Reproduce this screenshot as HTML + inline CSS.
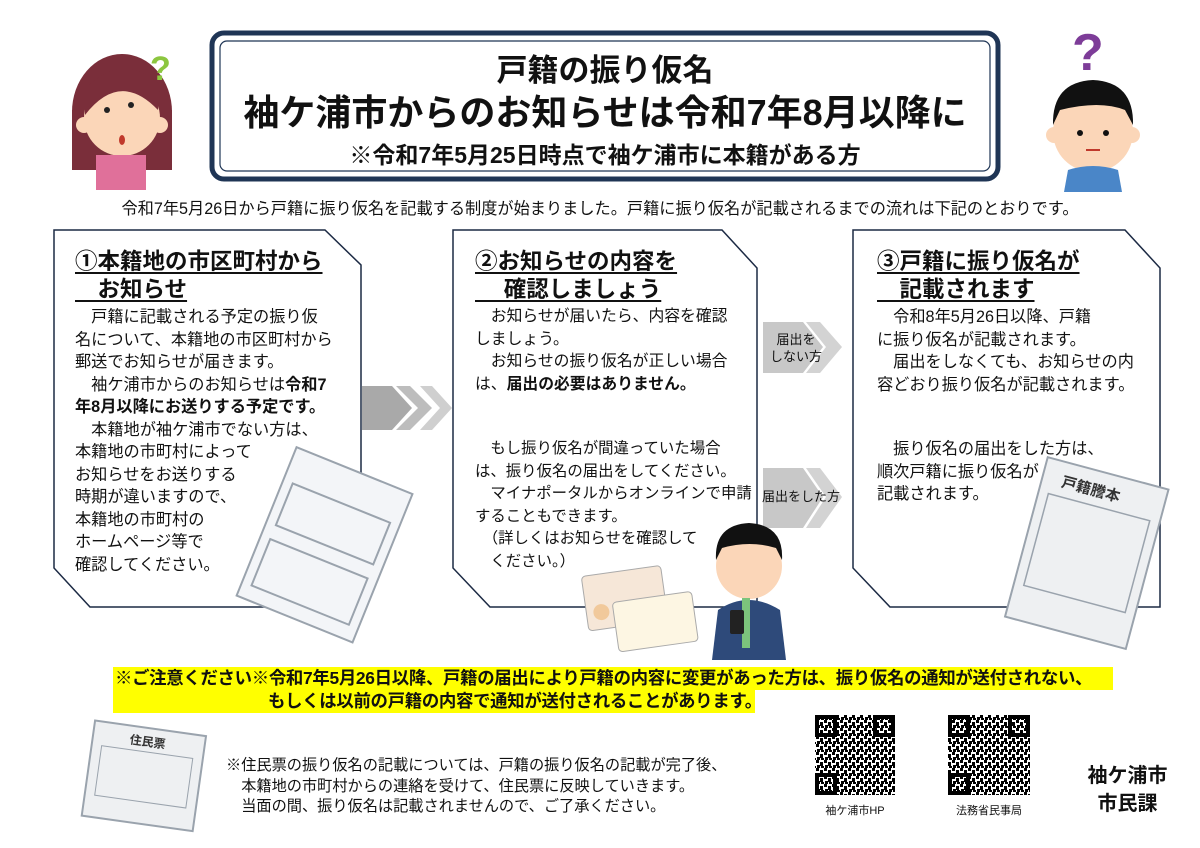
<!DOCTYPE html>
<html><head><meta charset="utf-8"><style>
*{margin:0;padding:0;box-sizing:border-box}
body{width:1200px;height:848px;background:#fff;position:relative;overflow:hidden;font-family:"Liberation Sans","Noto Sans CJK JP",sans-serif;color:#111}
.a{position:absolute;white-space:nowrap}
.t{font-weight:bold;text-align:center;left:210px;width:790px}
.h{font-weight:bold;font-size:22.5px;line-height:28px;text-decoration:underline;text-underline-offset:3px}
.b{font-size:16.2px;line-height:22.5px}
.b b{font-weight:bold}
</style></head><body>
<svg class="a" style="left:0;top:0" width="1200" height="848">
<defs>
<pattern id="qr" width="8" height="8" patternUnits="userSpaceOnUse">
<rect width="8" height="8" fill="#fff"/><rect x="0" y="0" width="3" height="3" fill="#000"/><rect x="4" y="2" width="3" height="4" fill="#000"/><rect x="1" y="5" width="3" height="3" fill="#000"/><rect x="5" y="6" width="3" height="2" fill="#000"/>
</pattern>
</defs>
<rect x="212" y="33" width="786" height="146" rx="12" fill="#fff" stroke="#1f3555" stroke-width="5"/>
<rect x="220" y="41" width="770" height="130" rx="7" fill="none" stroke="#1f3555" stroke-width="1.2"/>
<polygon points="54,230 325,230 361,265 361,607 90,607 54,568" fill="#fff" stroke="#1c2a44" stroke-width="1.5"/>
<polygon points="453,230 722,230 757,268 757,607 490,607 453,568" fill="#fff" stroke="#1c2a44" stroke-width="1.5"/>
<polygon points="853,230 1125,230 1160,268 1160,607 890,607 853,568" fill="#fff" stroke="#1c2a44" stroke-width="1.5"/>
<polygon points="362,386 392,386 412,408 392,430 362,430" fill="#a9a9a9"/>
<polygon points="396,386 410,386 432,408 410,430 396,430 418,408" fill="#bdbdbd"/>
<polygon points="420,386 432,386 452,408 432,430 420,430 440,408" fill="#cfcfcf"/>
<polygon points="763,322 803,322 823,347 803,373 763,373" fill="#c8c8c8"/>
<polygon points="806,322 820,322 842,347 820,373 806,373 826,347" fill="#d3d3d3"/>
<polygon points="763,468 803,468 823,497 803,528 763,528" fill="#c8c8c8"/>
<polygon points="806,468 820,468 842,497 820,528 806,528 826,497" fill="#d3d3d3"/>
<rect x="113" y="667" width="1000" height="23" fill="#ffff00"/>
<rect x="113" y="690" width="642" height="23" fill="#ffff00"/>
<ellipse cx="122" cy="112" rx="50" ry="58" fill="#7a2e3a"/>
<rect x="72" y="110" width="100" height="60" fill="#7a2e3a"/>
<circle cx="122" cy="118" r="38" fill="#fbd6b8"/>
<circle cx="84" cy="125" r="8" fill="#fbd6b8"/><circle cx="160" cy="125" r="8" fill="#fbd6b8"/>
<path d="M85 115 Q120 70 158 110 L160 85 Q122 50 84 90Z" fill="#7a2e3a"/>
<circle cx="107" cy="110" r="3" fill="#222"/><circle cx="131" cy="105" r="3" fill="#222"/>
<ellipse cx="122" cy="140" rx="3" ry="5" fill="#c0392b"/>
<path d="M96 155 L146 155 L146 190 L96 190Z" fill="#e0709a"/>
<text x="150" y="80" font-size="34" font-weight="bold" fill="#8cc63f" font-family="Liberation Sans">?</text>
<circle cx="1093" cy="132" r="40" fill="#fbd6b8"/>
<circle cx="1054" cy="135" r="8" fill="#fbd6b8"/><circle cx="1132" cy="135" r="8" fill="#fbd6b8"/>
<path d="M1053 125 Q1052 82 1093 80 Q1134 82 1133 125 L1125 110 Q1100 100 1060 110Z" fill="#111"/>
<circle cx="1080" cy="133" r="3" fill="#111"/><circle cx="1106" cy="133" r="3" fill="#111"/>
<line x1="1086" y1="150" x2="1100" y2="150" stroke="#c0392b" stroke-width="2"/>
<path d="M1068 170 Q1093 162 1118 170 L1122 192 L1064 192Z" fill="#4a86c8"/>
<text x="1072" y="70" font-size="52" font-weight="bold" fill="#7d3c98" font-family="Liberation Sans">?</text>
<g transform="rotate(22 325 545)"><rect x="262" y="465" width="125" height="160" fill="#f3f5f8" stroke="#9aa3ad" stroke-width="2"/>
<rect x="272" y="500" width="105" height="45" fill="none" stroke="#9aa3ad" stroke-width="2"/><rect x="272" y="560" width="105" height="50" fill="none" stroke="#9aa3ad" stroke-width="2"/></g>
<g transform="rotate(15 1085 550)"><rect x="1025" y="470" width="125" height="165" fill="#eef0f2" stroke="#9aa3ad" stroke-width="2"/>
<rect x="1035" y="505" width="105" height="95" fill="none" stroke="#9aa3ad" stroke-width="1.5"/>
<text x="1045" y="495" font-size="15" font-weight="bold" fill="#333" font-family="Noto Sans CJK JP">戸籍謄本</text></g>
<g transform="rotate(-8 630 600)"><rect x="585" y="570" width="80" height="55" rx="4" fill="#f6e7d8" stroke="#aaa"/><rect x="612" y="600" width="80" height="50" rx="4" fill="#fdf6e3" stroke="#aaa"/><circle cx="600" cy="608" r="8" fill="#f1c99b"/></g>
<path d="M712 660 L718 610 Q748 590 780 610 L786 660Z" fill="#2e4a7a"/>
<circle cx="749" cy="566" r="33" fill="#fbd6b8"/>
<path d="M716 560 Q714 525 749 523 Q784 525 782 560 L776 548 Q750 540 722 548Z" fill="#111"/>
<rect x="742" y="598" width="8" height="50" fill="#7cc47c"/>
<rect x="730" y="610" width="14" height="24" rx="2" fill="#222"/>
<g transform="rotate(8 145 775)"><rect x="88" y="728" width="112" height="96" fill="#eef0f2" stroke="#9aa3ad" stroke-width="2"/><rect x="98" y="752" width="92" height="50" fill="none" stroke="#9aa3ad"/>
<text x="125" y="746" font-size="12" font-weight="bold" fill="#333" font-family="Noto Sans CJK JP">住民票</text></g>
<rect x="815" y="715" width="80" height="80" fill="url(#qr)"/>
<rect x="948" y="715" width="82" height="80" fill="url(#qr)"/>
<g fill="none" stroke="#000" stroke-width="4">
<rect x="817" y="717" width="18" height="18"/><rect x="875" y="717" width="18" height="18"/><rect x="817" y="775" width="18" height="18"/>
<rect x="950" y="717" width="18" height="18"/><rect x="1010" y="717" width="18" height="18"/><rect x="950" y="775" width="18" height="18"/></g>
</svg>

<div class="a t" style="top:51px;font-size:31px;line-height:40px">戸籍の振り仮名</div>
<div class="a t" style="top:90px;font-size:36px;line-height:46px">袖ケ浦市からのお知らせは令和7年8月以降に</div>
<div class="a t" style="top:140px;font-size:23px;line-height:30px">※令和7年5月25日時点で袖ケ浦市に本籍がある方</div>
<div class="a" style="left:0;width:1200px;text-align:center;top:198px;font-size:16.2px;line-height:22px">令和7年5月26日から戸籍に振り仮名を記載する制度が始まりました。戸籍に振り仮名が記載されるまでの流れは下記のとおりです。</div>

<div class="a h" style="left:75px;top:248px">①本籍地の市区町村から<br>　お知らせ</div>
<div class="a b" style="left:75px;top:306px">　戸籍に記載される予定の振り仮<br>名について、本籍地の市区町村から<br>郵送でお知らせが届きます。<br>　袖ケ浦市からのお知らせは<b>令和7</b><br><b>年8月以降にお送りする予定です。</b><br>　本籍地が袖ケ浦市でない方は、<br>本籍地の市町村によって<br>お知らせをお送りする<br>時期が違いますので、<br>本籍地の市町村の<br>ホームページ等で<br>確認してください。</div>

<div class="a h" style="left:475px;top:248px">②お知らせの内容を<br>　 確認しましょう</div>
<div class="a b" style="left:475px;top:306px;font-size:15.8px">　お知らせが届いたら、内容を確認<br>しましょう。<br>　お知らせの振り仮名が正しい場合<br>は、<b>届出の必要はありません。</b></div>
<div class="a b" style="left:475px;top:438px;font-size:15.4px">　もし振り仮名が間違っていた場合<br>は、振り仮名の届出をしてください。<br>　マイナポータルからオンラインで申請<br>することもできます。<br>　（詳しくはお知らせを確認して<br>　ください。）</div>

<div class="a" style="left:770px;top:331px;font-size:13px;line-height:17px;text-align:center">届出を<br>しない方</div>
<div class="a" style="left:762px;top:488px;font-size:13px;line-height:17px">届出をした方</div>

<div class="a h" style="left:877px;top:248px">③戸籍に振り仮名が<br>　記載されます</div>
<div class="a b" style="left:877px;top:306px">　令和8年5月26日以降、戸籍<br>に振り仮名が記載されます。<br>　届出をしなくても、お知らせの内<br>容どおり振り仮名が記載されます。</div>
<div class="a b" style="left:877px;top:438px">　振り仮名の届出をした方は、<br>順次戸籍に振り仮名が<br>記載されます。</div>

<div class="a" style="left:115px;top:667px;font-size:17.4px;line-height:23px;font-weight:bold;letter-spacing:-0.3px">※ご注意ください※令和7年5月26日以降、戸籍の届出により戸籍の内容に変更があった方は、振り仮名の通知が送付されない、</div>
<div class="a" style="left:268px;top:690px;font-size:17.4px;line-height:23px;font-weight:bold;letter-spacing:-0.3px">もしくは以前の戸籍の内容で通知が送付されることがあります。</div>

<div class="a" style="left:226px;top:756px;font-size:15.2px;line-height:20.5px">※住民票の振り仮名の記載については、戸籍の振り仮名の記載が完了後、<br>　本籍地の市町村からの連絡を受けて、住民票に反映していきます。<br>　当面の間、振り仮名は記載されませんので、ご了承ください。</div>
<div class="a" style="left:815px;top:802px;width:80px;text-align:center;font-size:11px">袖ケ浦市HP</div>
<div class="a" style="left:944px;top:802px;width:90px;text-align:center;font-size:11px">法務省民事局</div>
<div class="a" style="left:1075px;top:762px;width:105px;text-align:center;font-size:20px;line-height:28px;font-weight:bold">袖ケ浦市<br>市民課</div>
</body></html>
